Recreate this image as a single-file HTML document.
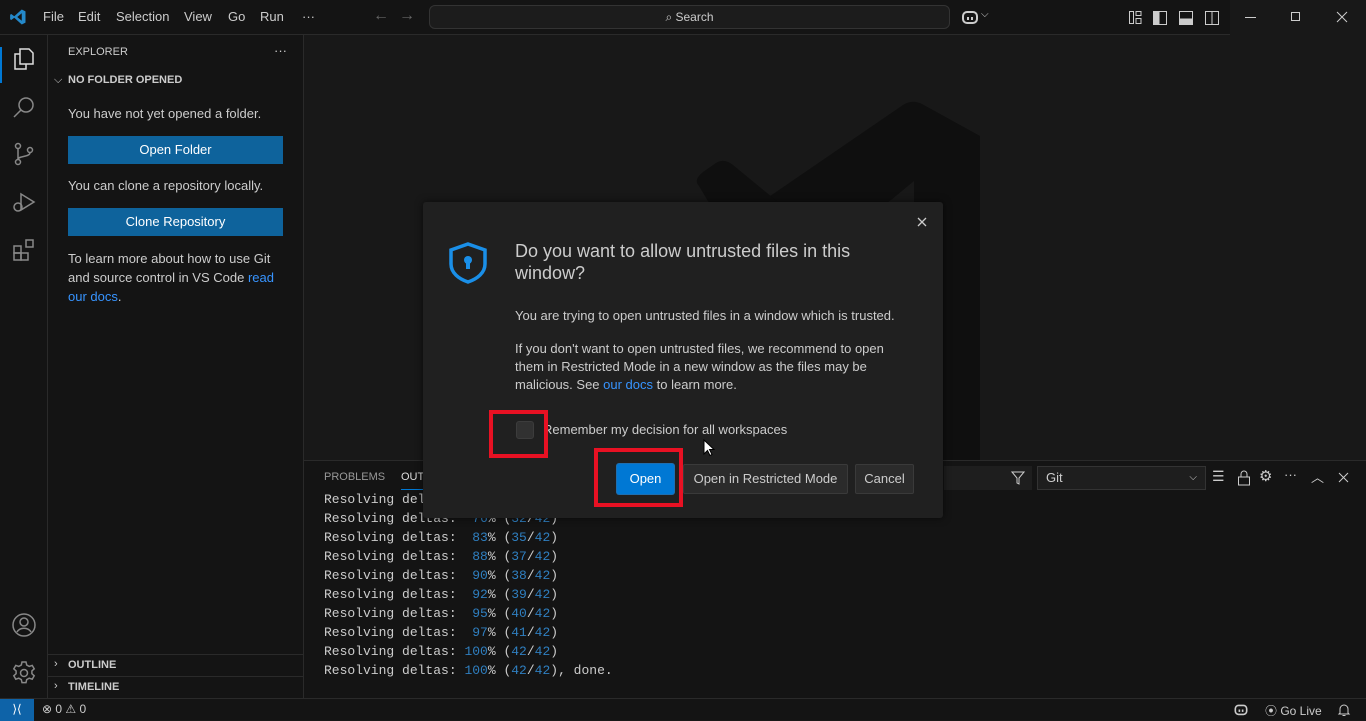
<!DOCTYPE html>
<html><head><meta charset="utf-8"><style>
*{margin:0;padding:0;box-sizing:border-box}
body{width:1366px;height:720px;background:#181818;font-family:"Segoe UI","Liberation Sans",sans-serif;color:#ccc;overflow:hidden;position:relative;font-size:13px}
.abs{position:absolute}
.title{left:0;top:0;width:1366px;height:35px;background:#141414;border-bottom:1px solid #2a2a2a}
.menu span{position:absolute;top:9px;font-size:13px;color:#ccc}
.act{left:0;top:35px;width:48px;height:663px;background:#141414;border-right:1px solid #2a2a2a}
.side{left:48px;top:35px;width:256px;height:663px;background:#141414;border-right:1px solid #2a2a2a}
.btn{position:absolute;left:20px;width:215px;height:28px;background:#0e639c;color:#fff;text-align:center;line-height:27px;font-size:13px}
.panel{left:304px;top:460px;width:1062px;height:238px;background:#141414;border-top:1px solid #2a2a2a}
.out{font-family:"Liberation Mono",monospace;font-size:13px;color:#ccc;line-height:19px;position:absolute;left:20px;top:29px;white-space:pre}
.n{color:#2f7fc0}
.status{left:0;top:698px;width:1366px;height:22px;background:#141414;border-top:1px solid #2a2a2a;font-size:12px}
.dlg{left:423px;top:202px;width:520px;height:316px;background:#202020;border-radius:3px;box-shadow:0 0 8px rgba(0,0,0,.6)}
.dbtn{position:absolute;top:262px;height:30px;border:1px solid #3a3a3a;background:#2b2b2b;color:#ccc;line-height:28px;text-align:center;font-size:13px;border-radius:2px}
.red{position:absolute;border:4px solid #e81123}
</style></head><body>
<svg class="abs" style="left:0;top:0" width="1366" height="720"><path d="M903 105 Q912 99 922 104 L980 136 V460 H914 V181 L800 275 L640 420 L560 340 Z" fill="#0f0f0f"/><path d="M699 186 Q693 180 703 172 L716 163 Q724 158 733 165 L790 212 L740 255 Z" fill="#0f0f0f"/></svg>
<div class="abs title">
<svg class="abs" style="left:9px;top:8px" width="18" height="18" viewBox="0 0 24 24"><path d="M17 2 L22 4.5 V19.5 L17 22 L7 13 L3 16 L1.5 15 V9 L3 8 L7 11 Z M17 7 L11 12 L17 17Z" fill="#2489ca"/></svg>
<div class="menu"><span style="left:43px">File</span><span style="left:78px">Edit</span><span style="left:116px">Selection</span><span style="left:184px">View</span><span style="left:228px">Go</span><span style="left:260px">Run</span><span style="left:302px">···</span></div>
<span class="abs" style="left:373px;top:7px;color:#666;font-size:16px">←</span><span class="abs" style="left:399px;top:7px;color:#666;font-size:16px">→</span>
<div class="abs" style="left:429px;top:5px;width:521px;height:24px;border:1px solid #333;border-radius:6px;background:#1c1c1c;text-align:center;line-height:22px;font-size:12px;color:#ccc">⌕ Search</div>
<svg class="abs" style="left:962px;top:9px" width="16" height="16" viewBox="0 0 16 16"><rect x="1" y="3" width="14" height="11" rx="4" fill="none" stroke="#ccc" stroke-width="2"/><rect x="5" y="8" width="2" height="3" fill="#ccc"/><rect x="9" y="8" width="2" height="3" fill="#ccc"/></svg>
<span class="abs" style="left:981px;top:9px;font-size:10px;color:#ccc">⌵</span>
<svg class="abs" style="left:1128px;top:10px" width="100" height="16" viewBox="0 0 100 16" fill="none" stroke="#ccc"><rect x="1.5" y="1.5" width="4" height="12"/><rect x="8" y="1.5" width="5" height="4"/><rect x="8" y="8.5" width="5" height="5"/><rect x="25.5" y="1.5" width="13" height="13"/><rect x="26" y="2" width="5" height="12" fill="#ccc"/><rect x="51.5" y="1.5" width="13" height="13"/><rect x="52" y="9" width="12" height="5" fill="#ccc"/><rect x="77.5" y="1.5" width="13" height="13"/><line x1="84" y1="2" x2="84" y2="14"/></svg>
<div class="abs" style="left:1230px;top:0;width:136px;height:35px;background:#181818"></div>
<div class="abs" style="left:1245px;top:17px;width:11px;height:1px;background:#ccc"></div>
<div class="abs" style="left:1291px;top:12px;width:9px;height:9px;border:1px solid #ccc"></div>
<svg class="abs" style="left:1336px;top:11px" width="12" height="12" viewBox="0 0 12 12" stroke="#ccc"><path d="M1 1L11 11M11 1L1 11"/></svg>
</div>
<div class="abs act">
<div class="abs" style="left:0;top:12px;width:2px;height:36px;background:#0078d4"></div>
<svg class="abs" style="left:12px;top:12px" width="24" height="24" viewBox="0 0 24 24" fill="none" stroke="#ddd" stroke-width="1.5"><path d="M8 2h9l4 4v11H8z"/><path d="M8 7H3v15h11v-5"/></svg>
<svg class="abs" style="left:12px;top:60px" width="24" height="24" viewBox="0 0 24 24" fill="none" stroke="#888" stroke-width="1.5"><circle cx="14" cy="10" r="7"/><path d="M9 15L2 22"/></svg>
<svg class="abs" style="left:12px;top:107px" width="24" height="24" viewBox="0 0 24 24" fill="none" stroke="#888" stroke-width="1.5"><circle cx="6" cy="4" r="2.5"/><circle cx="6" cy="20" r="2.5"/><circle cx="18" cy="8" r="2.5"/><path d="M6 6.5v11M18 10.5c0 5-12 3-12 7"/></svg>
<svg class="abs" style="left:12px;top:155px" width="24" height="24" viewBox="0 0 24 24" fill="none" stroke="#888" stroke-width="1.5"><path d="M9 4l13 8-13 8z"/><circle cx="6" cy="17" r="4"/></svg>
<svg class="abs" style="left:12px;top:203px" width="24" height="24" viewBox="0 0 24 24" fill="none" stroke="#888" stroke-width="1.5"><rect x="2" y="8" width="7" height="7"/><rect x="2" y="15" width="7" height="7"/><rect x="9" y="15" width="7" height="7"/><rect x="14" y="2" width="7" height="7"/></svg>
<svg class="abs" style="left:12px;top:578px" width="24" height="24" viewBox="0 0 24 24" fill="none" stroke="#888" stroke-width="1.5"><circle cx="12" cy="12" r="11"/><circle cx="12" cy="9" r="4"/><path d="M5 19c3-5 11-5 14 0"/></svg>
<svg class="abs" style="left:12px;top:626px" width="24" height="24" viewBox="0 0 24 24" fill="none" stroke="#888" stroke-width="1.5"><circle cx="12" cy="12" r="3.5"/><path d="M10 1h4l.7 3 2.5 1.4 3-1 2 3.4-2.3 2.1v2.8l2.3 2.1-2 3.4-3-1-2.5 1.4-.7 3h-4l-.7-3-2.5-1.4-3 1-2-3.4 2.3-2.1V9.9L1.8 7.8l2-3.4 3 1L9.3 4z"/></svg>
</div>
<div class="abs side">
<span class="abs" style="left:20px;top:11px;font-size:11px;color:#ccc">EXPLORER</span>
<span class="abs" style="left:226px;top:8px;color:#ccc">···</span>
<span class="abs" style="left:6px;top:39px;font-size:11px;color:#ccc">⌵</span>
<span class="abs" style="left:20px;top:39px;font-size:11px;font-weight:bold;color:#ccc">NO FOLDER OPENED</span>
<span class="abs" style="left:20px;top:71px">You have not yet opened a folder.</span>
<div class="btn" style="top:101px">Open Folder</div>
<span class="abs" style="left:20px;top:143px">You can clone a repository locally.</span>
<div class="btn" style="top:173px">Clone Repository</div>
<div class="abs" style="left:20px;top:214px;width:220px;line-height:19px">To learn more about how to use Git and source control in VS Code <span style="color:#3794ff">read our docs</span>.</div>
<div class="abs" style="left:0;top:619px;width:255px;border-top:1px solid #2a2a2a"></div>
<span class="abs" style="left:6px;top:623px;font-size:11px">›</span><span class="abs" style="left:20px;top:624px;font-size:11px;font-weight:bold">OUTLINE</span>
<div class="abs" style="left:0;top:641px;width:255px;border-top:1px solid #2a2a2a"></div>
<span class="abs" style="left:6px;top:645px;font-size:11px">›</span><span class="abs" style="left:20px;top:646px;font-size:11px;font-weight:bold">TIMELINE</span>
</div>
<div class="abs panel">
<span class="abs" style="left:20px;top:10px;font-size:11px;color:#999">PROBLEMS</span>
<span class="abs" style="left:97px;top:10px;font-size:11px;color:#ddd">OUTPUT</span>
<div class="abs" style="left:97px;top:28px;width:50px;height:1px;background:#0078d4"></div>
<div class="abs" style="left:640px;top:5px;width:88px;height:24px;background:#1e1e1e"></div>
<svg class="abs" style="left:707px;top:10px" width="14" height="14" viewBox="0 0 14 14" fill="none" stroke="#ccc"><path d="M1 1h12L8 7v6L6 12V7z"/></svg>
<div class="abs" style="left:733px;top:5px;width:169px;height:24px;background:#1e1e1e;border:1px solid #333;padding-left:8px;line-height:22px">Git<span style="position:absolute;right:8px;font-size:10px">⌵</span></div>
<span class="abs" style="left:908px;top:7px;font-size:14px;color:#ccc">☰</span>
<svg class="abs" style="left:933px;top:9px" width="14" height="16" viewBox="0 0 14 16" fill="none" stroke="#ccc"><rect x="1.5" y="7" width="11" height="8"/><path d="M4 7V4a3 3 0 016 0v3"/></svg>
<span class="abs" style="left:955px;top:6px;font-size:15px;color:#ccc">⚙</span>
<span class="abs" style="left:980px;top:6px;color:#ccc">···</span>
<span class="abs" style="left:1007px;top:6px;color:#ccc">︿</span>
<svg class="abs" style="left:1034px;top:11px" width="11" height="11" viewBox="0 0 11 11" stroke="#ccc"><path d="M1 1L10 10M10 1L1 10"/></svg>
<div class="out">Resolving deltas:  <span class="n">76</span>% (<span class="n">32</span>/<span class="n">42</span>)
Resolving deltas:  <span class="n">76</span>% (<span class="n">32</span>/<span class="n">42</span>)
Resolving deltas:  <span class="n">83</span>% (<span class="n">35</span>/<span class="n">42</span>)
Resolving deltas:  <span class="n">88</span>% (<span class="n">37</span>/<span class="n">42</span>)
Resolving deltas:  <span class="n">90</span>% (<span class="n">38</span>/<span class="n">42</span>)
Resolving deltas:  <span class="n">92</span>% (<span class="n">39</span>/<span class="n">42</span>)
Resolving deltas:  <span class="n">95</span>% (<span class="n">40</span>/<span class="n">42</span>)
Resolving deltas:  <span class="n">97</span>% (<span class="n">41</span>/<span class="n">42</span>)
Resolving deltas: <span class="n">100</span>% (<span class="n">42</span>/<span class="n">42</span>)
Resolving deltas: <span class="n">100</span>% (<span class="n">42</span>/<span class="n">42</span>), done.</div>
</div>
<div class="abs dlg">
<svg class="abs" style="left:494px;top:15px" width="10" height="10" viewBox="0 0 10 10" stroke="#ccc" stroke-width="1.3"><path d="M1 1L9 9M9 1L1 9"/></svg>
<svg class="abs" style="left:25px;top:40px" width="40" height="42" viewBox="0 0 40 42"><path d="M20 2 L37 8 V22 C37 31 29 37 20 40 C11 37 3 31 3 22 V8 Z" fill="none" stroke="#1a8fe8" stroke-width="3.5"/><circle cx="20" cy="18" r="4" fill="#1a8fe8"/><rect x="18" y="20" width="4" height="7" fill="#1a8fe8"/></svg>
<div class="abs" style="left:92px;top:38px;width:400px;font-size:18px;line-height:22px;color:#ccc">Do you want to allow untrusted files in this window?</div>
<div class="abs" style="left:92px;top:106px;font-size:13px">You are trying to open untrusted files in a window which is trusted.</div>
<div class="abs" style="left:92px;top:138px;width:400px;font-size:13px;line-height:18px">If you don't want to open untrusted files, we recommend to open them in Restricted Mode in a new window as the files may be malicious. See <span style="color:#3794ff">our docs</span> to learn more.</div>
<div class="abs" style="left:93px;top:219px;width:18px;height:18px;background:#313131;border:1px solid #3c3c3c;border-radius:3px"></div>
<div class="abs" style="left:120px;top:220px;font-size:13px">Remember my decision for all workspaces</div>
<div class="red" style="left:66px;top:208px;width:59px;height:48px"></div>
<div class="dbtn" style="left:194px;width:57px;background:#0078d4;border:1px solid #0078d4;color:#fff;box-shadow:0 0 0 1px #1f6fb0">Open</div>
<div class="red" style="left:171px;top:246px;width:89px;height:59px"></div>
<div class="dbtn" style="left:260px;width:165px">Open in Restricted Mode</div>
<div class="dbtn" style="left:432px;width:59px">Cancel</div>
</div>
<svg class="abs" style="left:703px;top:439px" width="12" height="18" viewBox="0 0 12 18"><path d="M1 1v14l3.5-3.5 2.5 5 2-1-2.5-5H11z" fill="#fff" stroke="#000"/></svg>
<div class="abs status">
<div class="abs" style="left:0;top:0;width:34px;height:22px;background:#0e63a8;color:#fff;text-align:center;line-height:20px">⟩⟨</div>
<span class="abs" style="left:42px;top:3px;color:#ccc">⊗ 0 ⚠ 0</span>
<svg class="abs" style="left:1234px;top:4px" width="14" height="13" viewBox="0 0 16 16"><rect x="1" y="3" width="14" height="11" rx="4" fill="none" stroke="#ccc" stroke-width="2"/><rect x="5" y="8" width="2" height="3" fill="#ccc"/><rect x="9" y="8" width="2" height="3" fill="#ccc"/></svg>
<span class="abs" style="left:1265px;top:3px;color:#ccc">⦿ Go Live</span>
<svg class="abs" style="left:1337px;top:4px" width="14" height="14" viewBox="0 0 14 14" fill="none" stroke="#ccc"><path d="M3 10V6a4 4 0 018 0v4l1 1H2z M5.5 12.5h3"/></svg>
</div>
</body></html>
